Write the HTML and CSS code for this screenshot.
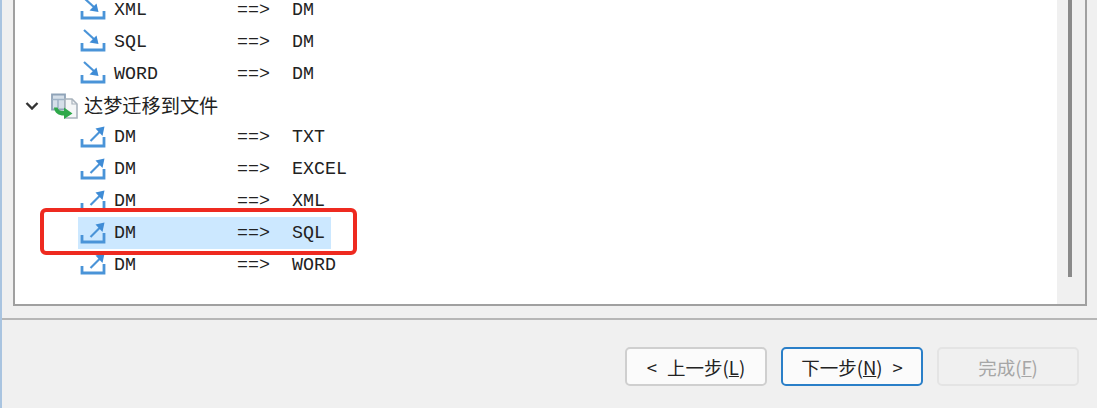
FILE: index.html
```html
<!DOCTYPE html>
<html lang="en">

<head>
  <meta charset="UTF-8">
  <meta name="viewport" content="width=device-width, initial-scale=1.0">
  <title>迁移</title>
  <link rel="stylesheet" href="styles.css">
</head>

<body>

  <svg class="icon-defs" width="0" height="0">
    <symbol id="icon-import" viewBox="0 0 28 24">
      <path d="M3 14v7h22v-7" fill="none" stroke="#4a94d8" stroke-width="2.800" />
      <path d="M5 1l11 10" fill="none" stroke="#4a94d8" stroke-width="2.200" />
      <path d="M19.500 15L10.500 13.500L17.500 6.500z" fill="#3f8cd6" />
    </symbol>
    <symbol id="icon-export" viewBox="0 0 28 24">
      <path d="M3 14v7h22V12" fill="none" stroke="#4a94d8" stroke-width="2.800" />
      <path d="M11.500 16L22 5.500" fill="none" stroke="#4a94d8" stroke-width="2.200" />
      <path d="M25.500 1.500L23.500 11L16.500 3.500z" fill="#3f8cd6" />
    </symbol>
  </svg>

  <div class="main">
    <div class="panel">
      <div class="tree">
        <div class="row child"><svg class="row-icon"><use href="#icon-import" /></svg><span class="col-a">XML</span><span class="col-b">==&gt;</span><span>DM</span></div>
        <div class="row child"><svg class="row-icon"><use href="#icon-import" /></svg><span class="col-a">SQL</span><span class="col-b">==&gt;</span><span>DM</span></div>
        <div class="row child"><svg class="row-icon"><use href="#icon-import" /></svg><span class="col-a">WORD</span><span class="col-b">==&gt;</span><span>DM</span></div>

        <div class="row group">
          <svg class="chevron" viewBox="0 0 14 8"><path d="M1.500 1l5.500 5.500L12.500 1" fill="none" stroke="#333" stroke-width="2.400" /></svg>
          <svg class="group-icon" viewBox="0 0 28 26">
            <path d="M2 1.500h13v15H2z" fill="#d5dfe9" stroke="#8fa3b8" stroke-width="1.800" />
            <path d="M2 6.500h13M8 6.500v9" fill="none" stroke="#a0b3c6" stroke-width="1.600" />
            <path d="M15 6h7l5 5v14H15z" fill="#f4f6f7" stroke="#a8b2bc" stroke-width="1.600" />
            <path d="M22 6v5h5" fill="none" stroke="#a8b2bc" stroke-width="1.200" />
            <path d="M4 14.500h3.500c.5 2.500 2.500 3.500 6.500 3.500v-3.500l8.500 6-8.500 5.500v-3.500c-5.500 0-9.500-2.500-10-8z" fill="#2ea84a" />
          </svg>
          <span class="group-name">达梦迁移到文件</span>
        </div>

        <div class="row child"><svg class="row-icon"><use href="#icon-export" /></svg><span class="col-a">DM</span><span class="col-b">==&gt;</span><span>TXT</span></div>
        <div class="row child"><svg class="row-icon"><use href="#icon-export" /></svg><span class="col-a">DM</span><span class="col-b">==&gt;</span><span>EXCEL</span></div>
        <div class="row child"><svg class="row-icon"><use href="#icon-export" /></svg><span class="col-a">DM</span><span class="col-b">==&gt;</span><span>XML</span></div>
        <div class="row child selected"><svg class="row-icon"><use href="#icon-export" /></svg><span class="col-a">DM</span><span class="col-b">==&gt;</span><span>SQL</span></div>
        <div class="row child"><svg class="row-icon"><use href="#icon-export" /></svg><span class="col-a">DM</span><span class="col-b">==&gt;</span><span>WORD</span></div>
      </div>

      <div class="scrollbar">
        <div class="thumb"></div>
      </div>
    </div>
  </div>

  <div class="footer">
    <button class="btn"><span>&lt;</span><span>上一步(<u>L</u>)</span></button>
    <button class="btn btn-default"><span>下一步(<u>N</u>)</span><span>&gt;</span></button>
    <button class="btn btn-disabled"><span>完成(<u>F</u>)</span></button>
  </div>

  <!-- 红色标注框 -->
  <div class="callout"></div>

</body>

</html>
```

FILE: styles.css
```css
body {
  margin: 0;
  height: 408px;
  overflow: hidden;
  position: relative;
  display: flex;
  flex-direction: column;
  box-sizing: border-box;
  border-left: 2px solid #a9c4e0;
  background: #f0f0f0;
  font-family: "Liberation Mono", "Noto Sans CJK SC", monospace;
  color: #222;
}

.icon-defs {
  position: absolute;
}

.main {
  height: 320px;
  box-sizing: border-box;
  padding: 0 10px 12px 11px;
  border-bottom: 2px solid #b6b6b6;
  flex: none;
}

.panel {
  display: flex;
  height: 100%;
  overflow: hidden;
  box-sizing: border-box;
  background: #fff;
  border: 2px solid #a0a0a0;
  border-top: none;
}

.tree {
  flex: 1;
  margin-top: -6px;
  font-size: 18.3px;
}

.row {
  display: flex;
  align-items: center;
  height: 31.875px;
}

.child {
  width: fit-content;
  margin-left: 63px;
  padding-right: 6px;
}

.selected {
  background: #cce8ff;
}

.row-icon {
  width: 28px;
  height: 24px;
  margin-left: 1px;
  margin-right: 7px;
  margin-top: -1px;
}

.col-a {
  width: 123px;
}

.col-b {
  width: 55px;
}

.group {
  padding-left: 10px;
}

.chevron {
  width: 14px;
  height: 8px;
  margin-right: 11px;
}

.group-icon {
  width: 28px;
  height: 26px;
  margin-right: 6px;
}

.group-name {
  font-family: "Noto Sans CJK SC", sans-serif;
  font-size: 19.2px;
  margin-top: -2px;
}

.scrollbar {
  flex: none;
  width: 28px;
  box-sizing: border-box;
  padding-left: 11px;
  background: #f0f0f0;
}

.thumb {
  width: 4px;
  height: 277px;
  background: #8a8a8a;
}

.footer {
  display: flex;
  justify-content: flex-end;
  gap: 14px;
  padding: 27px 18px 0 0;
}

.btn {
  width: 142px;
  height: 39px;
  display: flex;
  align-items: center;
  justify-content: center;
  gap: 10px;
  padding: 0;
  box-sizing: border-box;
  border: 2px solid #cfcfcf;
  border-radius: 5px;
  background: #fbfbfb;
  font-family: "Noto Sans CJK SC", sans-serif;
  font-size: 18.500px;
  color: #222;
}

.btn-default {
  border-color: #2a7fc8;
}

.btn-disabled {
  background: #f0f0f0;
  border-color: #e4e4e4;
  color: #a6a6a6;
}

.callout {
  position: absolute;
  left: 38px;
  top: 208px;
  width: 317px;
  height: 47px;
  box-sizing: border-box;
  border: 4px solid #ee2a20;
  border-radius: 6px;
}
```
